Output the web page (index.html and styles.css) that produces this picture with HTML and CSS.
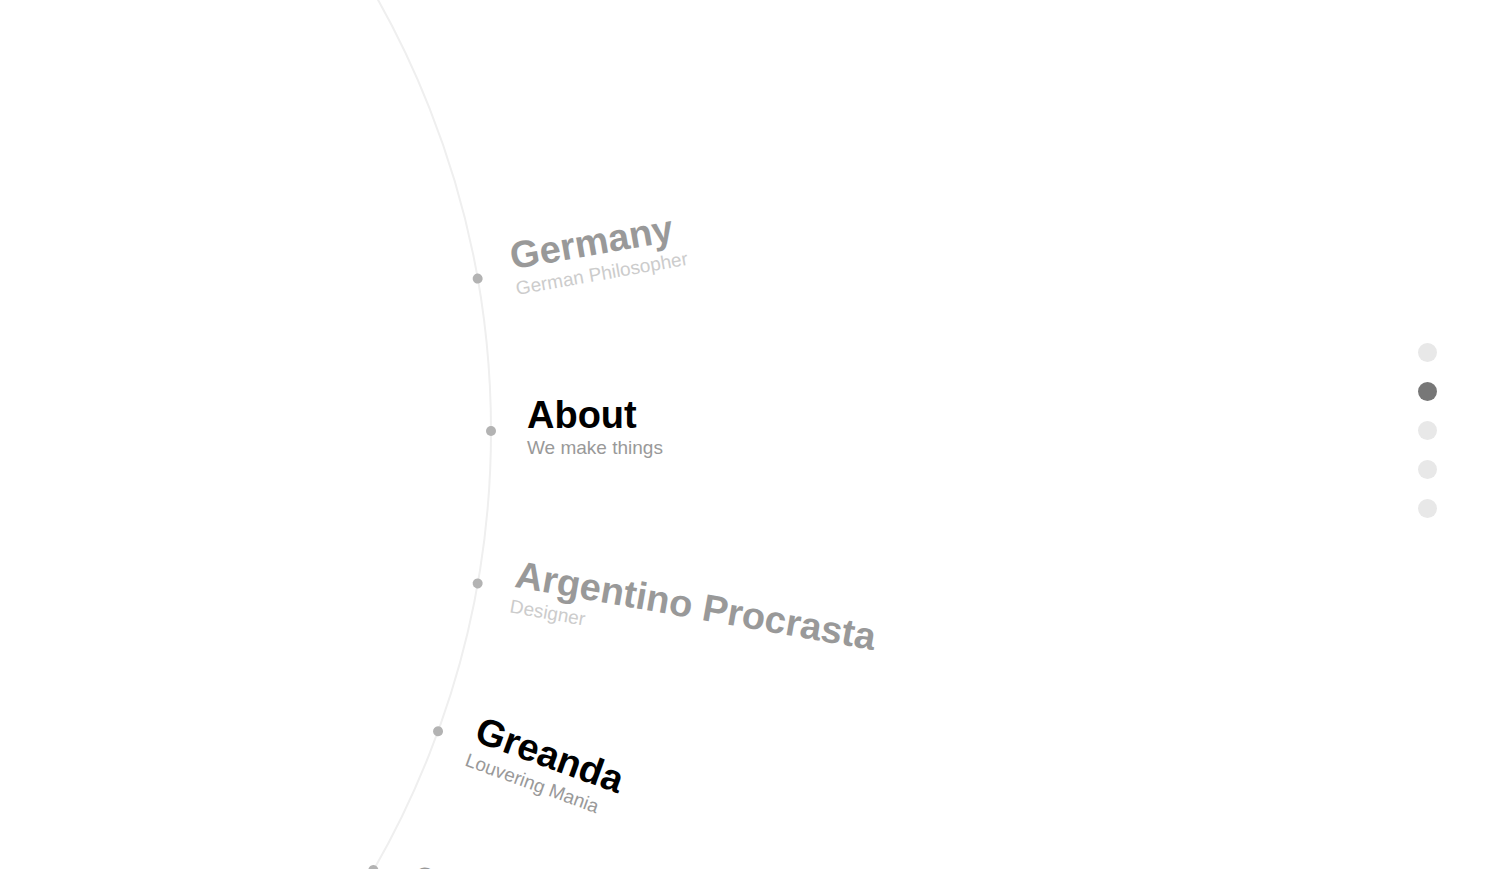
FILE: index.html
```html
<!DOCTYPE html>
<html lang="en">
<head>
<meta charset="utf-8">
<title>Wheel</title>
<link rel="stylesheet" href="styles.css">
</head>
<body>
<main class="stage">
  <div class="wheel">
    <div class="ring"></div>
    <a class="spoke spoke-1 faded" href="#germany">
      <span class="dot"></span>
      <span class="label">
        <span class="title">Germany</span>
        <span class="sub">German Philosopher</span>
      </span>
    </a>
    <a class="spoke spoke-2 active" href="#about">
      <span class="dot"></span>
      <span class="label">
        <span class="title">About</span>
        <span class="sub">We make things</span>
      </span>
    </a>
    <a class="spoke spoke-3 faded" href="#argentino">
      <span class="dot"></span>
      <span class="label">
        <span class="title">Argentino Procrasta</span>
        <span class="sub">Designer</span>
      </span>
    </a>
    <a class="spoke spoke-4 active" href="#greanda">
      <span class="dot"></span>
      <span class="label">
        <span class="title">Greanda</span>
        <span class="sub">Louvering Mania</span>
      </span>
    </a>
    <a class="spoke spoke-5 faded" href="#contact">
      <span class="dot"></span>
      <span class="label">
        <span class="title">Contact</span>
        <span class="sub">Say hello</span>
      </span>
    </a>
  </div>
  <nav class="pager">
    <span class="pip"></span>
    <span class="pip pip-on"></span>
    <span class="pip"></span>
    <span class="pip"></span>
    <span class="pip"></span>
  </nav>
</main>
</body>
</html>
```

FILE: styles.css
```css
html, body {
  margin: 0;
  padding: 0;
  background: #ffffff;
  overflow: hidden;
}

.stage {
  position: relative;
  width: 1491px;
  height: 869px;
  overflow: hidden;
  font-family: "Liberation Sans", Arial, sans-serif;
}

.wheel {
  position: absolute;
  left: -387px;
  top: 431px;
  width: 0;
  height: 0;
}

.ring {
  position: absolute;
  left: -879px;
  top: -879px;
  width: 1754px;
  height: 1754px;
  border: 2px solid #efefef;
  border-radius: 50%;
}

.spoke {
  position: absolute;
  left: 0;
  top: 0;
  width: 0;
  height: 0;
  text-decoration: none;
  color: inherit;
}

.spoke-1 { transform: rotate(-10deg) translateX(878px); }
.spoke-2 { transform: rotate(0deg) translateX(878px); }
.spoke-3 { transform: rotate(10deg) translateX(878px); }
.spoke-4 { transform: rotate(20deg) translateX(878px); }
.spoke-5 { transform: rotate(30deg) translateX(878px); }

.dot {
  position: absolute;
  left: -5px;
  top: -5px;
  width: 10px;
  height: 10px;
  border-radius: 50%;
  background: #b3b3b3;
}

.label {
  position: absolute;
  left: 36px;
  top: -35px;
  display: flex;
  flex-direction: column;
  gap: 4px;
  white-space: nowrap;
}

.title {
  font-size: 38px;
  line-height: 38px;
  font-weight: bold;
}

.sub {
  font-size: 19px;
  line-height: 19px;
}

.active .title { color: #000000; }
.active .sub { color: #999999; }

.faded .title { color: #999999; }
.faded .sub { color: #cccccc; }

.pager {
  position: absolute;
  right: 54px;
  top: 343px;
  display: flex;
  flex-direction: column;
  gap: 20px;
}

.pip {
  display: block;
  width: 19px;
  height: 19px;
  border-radius: 50%;
  background: #e8e8e8;
}

.pip-on {
  background: #777777;
}
```
